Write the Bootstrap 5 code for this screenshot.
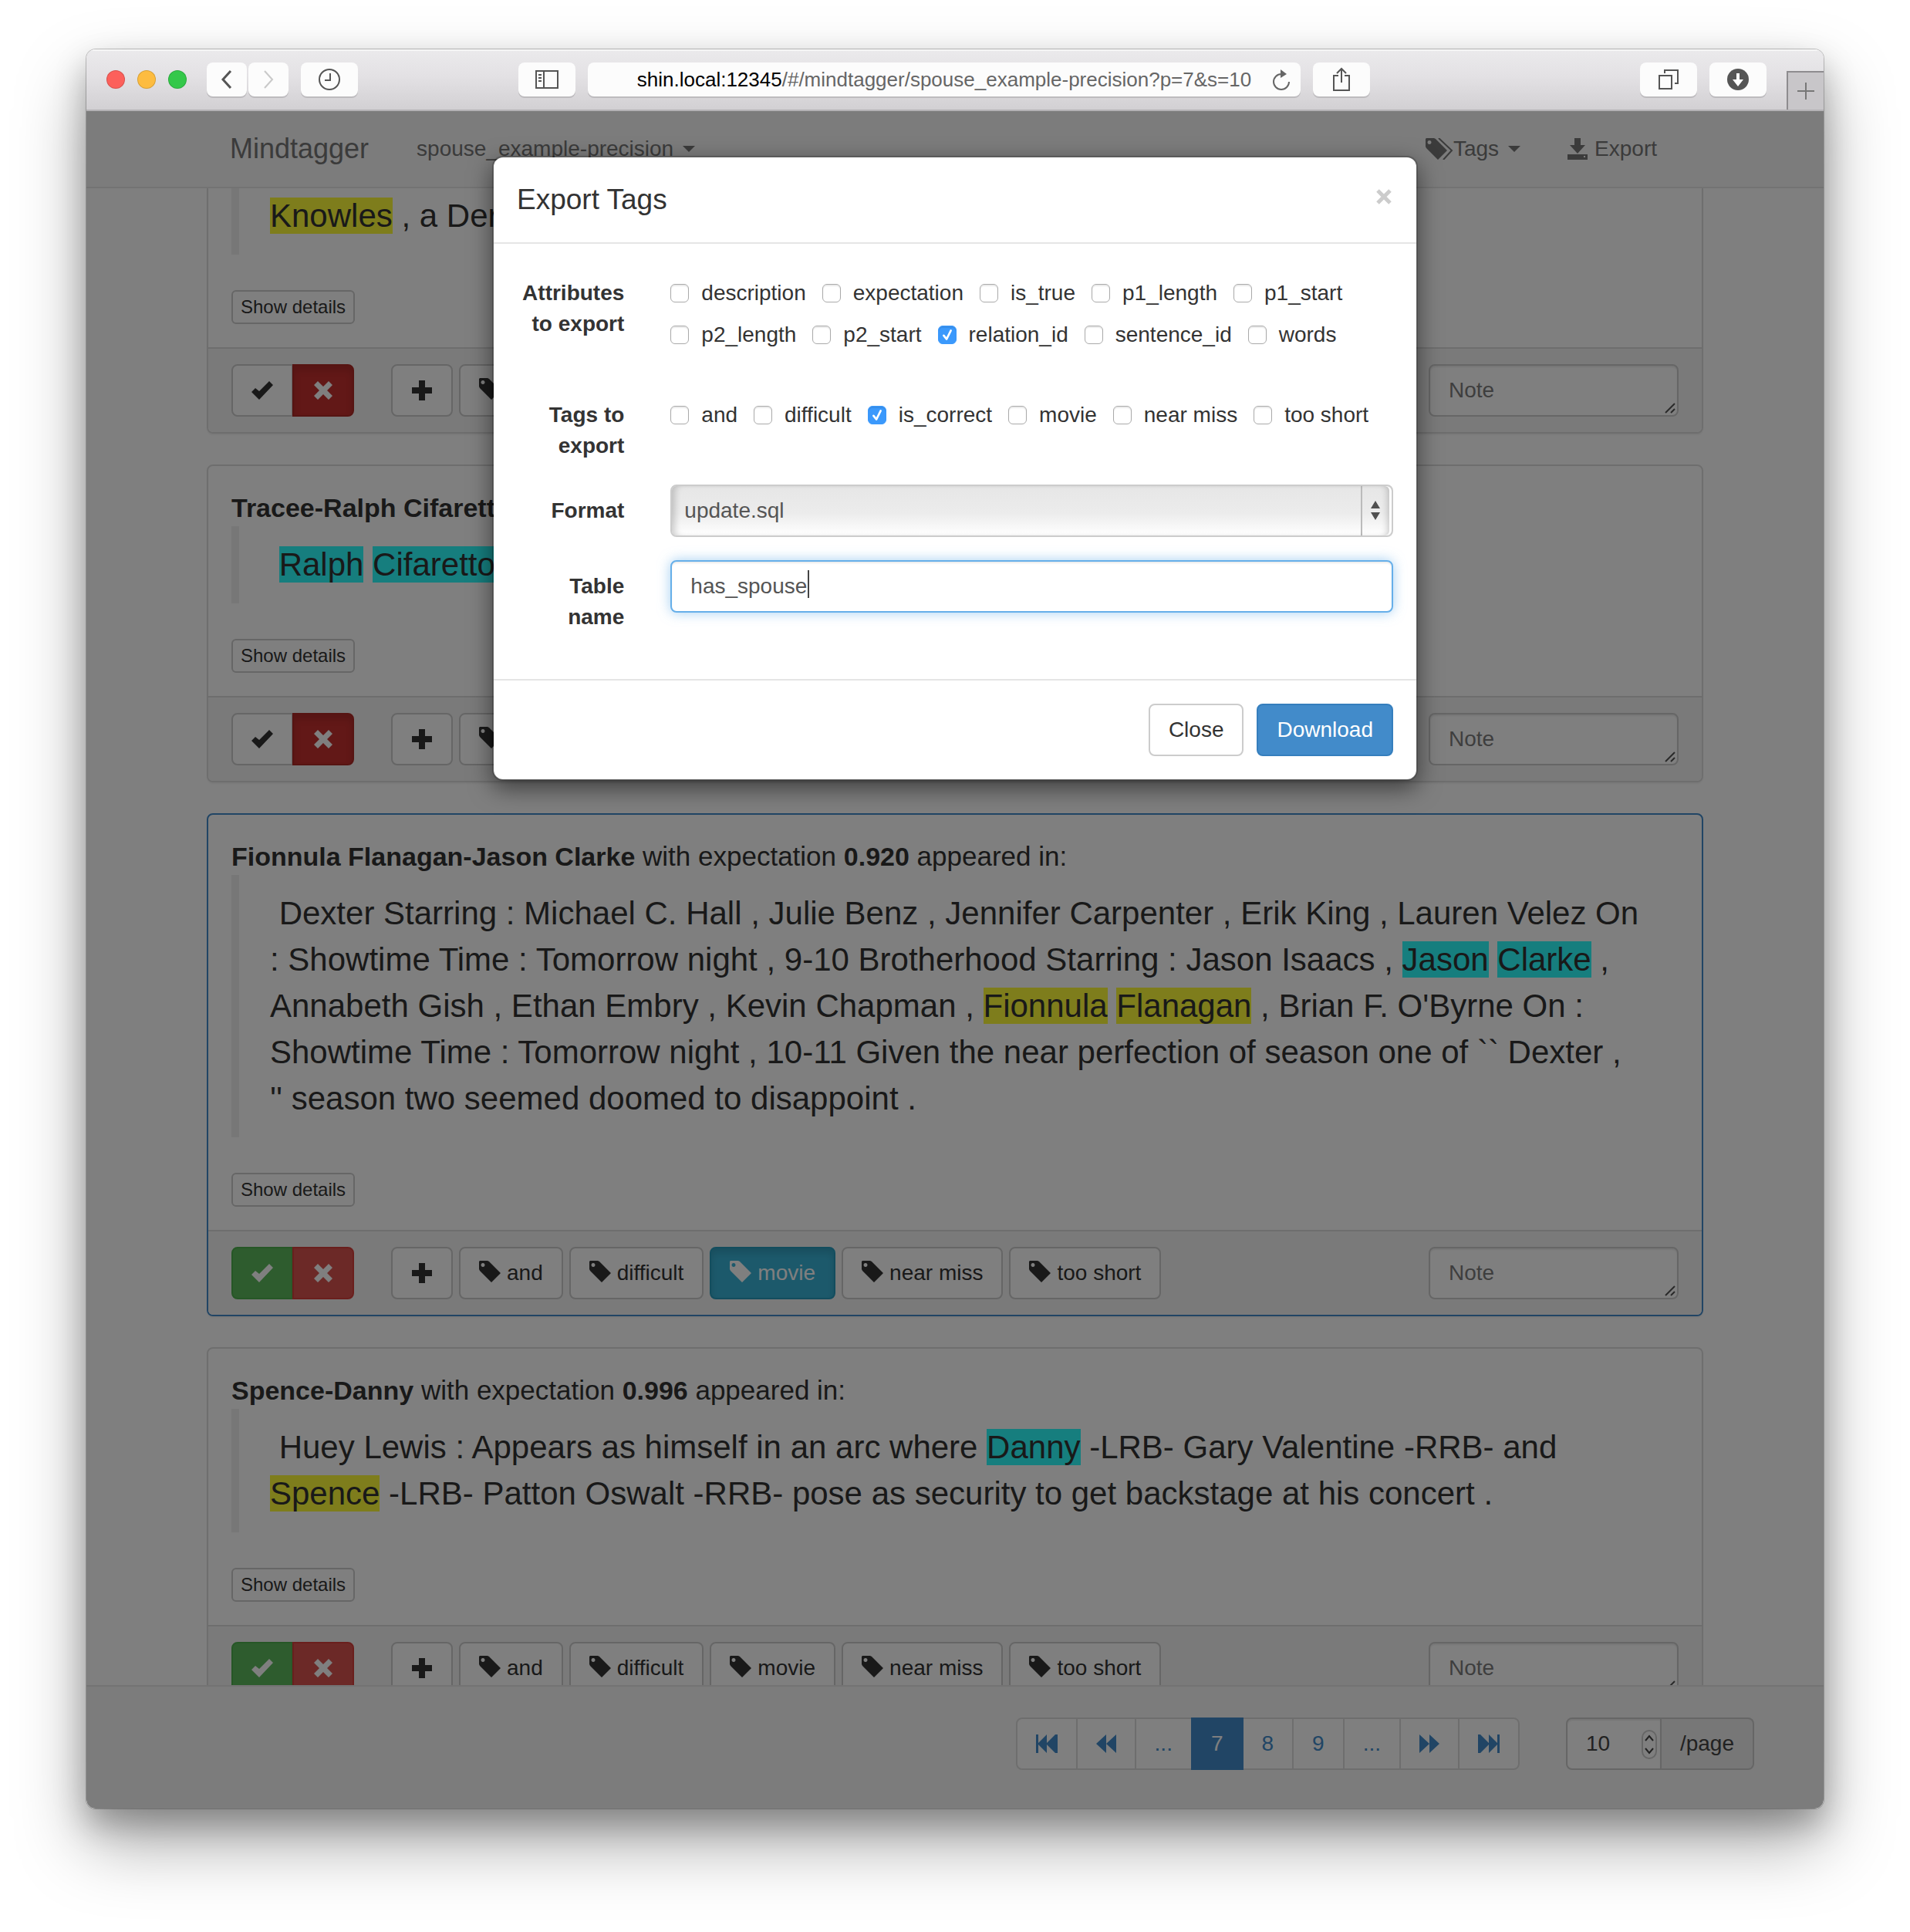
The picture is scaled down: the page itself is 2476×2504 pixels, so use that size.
<!DOCTYPE html>
<html lang="en">
<head>
<meta charset="utf-8">
<meta name="viewport" content="width=device-width, initial-scale=1">
<title>Mindtagger</title>
<link rel="stylesheet" href="https://cdn.jsdelivr.net/npm/bootstrap@5.3.0/dist/css/bootstrap.min.css">
<script src="https://cdn.jsdelivr.net/npm/bootstrap@5.3.0/dist/js/bootstrap.bundle.min.js"></script>
<style>
  body { font: 28px/40px "Liberation Sans", Arial, sans-serif; color: #333; background: #fff; padding: 64px 112px 160px; overflow: hidden; }
  svg { display: block; flex: none; fill: currentColor; }

  /* browser window */
  .win { height: calc(100vh - 224px); border-radius: 12px; overflow: hidden; box-shadow: 0 0 0 1px rgba(0,0,0,.22), 0 44px 90px rgba(0,0,0,.35), 0 20px 40px rgba(0,0,0,.25); }
  .toolbar { height: 80px; padding-left: 26px; background: linear-gradient(#ebeaec, #e3e1e4 45%, #d2d0d3); border-bottom: 2px solid #b4b2b5; box-shadow: inset 0 2px 0 #f6f6f6; }
  .light { width: 24px; height: 24px; border-radius: 50%; border: 1px solid rgba(0,0,0,.15); padding: 0; }
  .l-red { background: #fc605b; } .l-amber { background: #fdbc40; } .l-green { background: #34c84a; }
  .tool { width: 74px; height: 44px; padding: 0; border: 0; border-radius: 8px; background: #fcfcfc; box-shadow: 0 2px 0 #bdbbbe; color: #555; display: flex; align-items: center; justify-content: center; }
  .tool-sm { width: 52px; }
  .tools-nav { margin-left: 26px; gap: 2px; }
  .tool svg, .address svg { fill: none; stroke: currentColor; stroke-width: 2; }
  .address { height: 44px; padding: 0 14px 0 36px; border-radius: 8px; background: #fcfcfc; box-shadow: 0 2px 0 #bdbbbe; font-size: 26px; color: #666; }
  .tools-mid { margin: 0 350px 0 208px; gap: 16px; }
  .newtab { width: 48px; height: 50px; padding: 0; border: solid #8e8c8f; border-width: 2px 0 0 2px; background: #c8c6c9; color: #777; margin-left: 26px; }

  /* application */
  .bar { background: #f8f8f8; border: 0 solid #e7e7e7; }
  .topbar { height: 100px; border-bottom-width: 2px; }
  .botbar { height: 160px; border-top-width: 2px; padding: 40px 90px 0; }
  .wrap { width: 100%; max-width: 1940px; margin: 0 auto; }
  .topbar .wrap { padding: 0 60px 0 30px; }
  .topbar a { color: #777; text-decoration: none; }
  .brand { font-size: 36px; margin-right: 62px; }
  .tagmenu { margin-right: 60px; }
  .caret { width: 0; height: 0; border: 8px solid transparent; border-top-color: currentColor; border-bottom: 0; margin-left: 12px; }
  .task { border: 2px solid #ddd; border-radius: 8px; margin-bottom: 40px; box-shadow: 0 2px 2px rgba(0,0,0,.05); }
  .task.current { border-color: #428bca; }
  .task .card-body { padding: 30px; }
  .task.cut { border-top: 0; border-radius: 0 0 8px 8px; }
  .task.cut .card-body { padding-top: 0; }
  .task.cut .sentence { padding-top: 6px; }
  .headline { font-size: 35px; line-height: 48px; margin: 0; }
  .headline strong { font-size: 34px; }
  .sentence { font-size: 42px; line-height: 60px; margin: 0 0 46px; padding: 20px 40px; border-left: 10px solid #eee; }
  .p1, .p2 { color: inherit; padding: 0; }
  .p1 { background: #fcfa38; } .p2 { background: #2cfcfc; }
  .task .card-footer { padding: 20px 30px; background: #f5f5f5; border-top: 2px solid #ddd; border-radius: 0 0 6px 6px; }
  .btn { --bs-btn-font-size: 28px; --bs-btn-line-height: 40px; --bs-btn-padding-x: 24px; --bs-btn-padding-y: 12px; --bs-btn-border-width: 2px; --bs-btn-border-radius: 8px; }
  .ui { height: 68px; display: inline-flex; align-items: center; gap: 8px; white-space: nowrap; background: #fff; color: #333; border-color: #ccc; }
  .ui.mini { height: 44px; padding: 0 10px; font-size: 24px; border-radius: 6px; }
  .ui.good { background: #5cb85c; border-color: #4cae4c; color: #fff; }
  .ui.bad { background: #d9534f; border-color: #d43f3a; color: #fff; }
  .ui.bad.on { background: #c4302e; border-color: #ac2925; box-shadow: inset 0 6px 10px rgba(0,0,0,.125); }
  .ui.tagged { background: #39b3d7; border-color: #269abc; color: #fff; box-shadow: inset 0 6px 10px rgba(0,0,0,.125); }
  .ui.primary { background: #428bca; border-color: #357ebd; color: #fff; }
  .verdict { margin-right: 48px; }
  .verdict .ui { width: 80px; justify-content: center; }
  .verdict .ui.bad { margin-left: -2px; }
  .ui.add { width: 80px; justify-content: center; }
  .field { height: 68px; border: 2px solid #ccc; border-radius: 8px; padding: 12px 24px; font-size: 28px; line-height: 40px; color: #555; background: #fff; box-shadow: inset 0 2px 2px rgba(0,0,0,.075); }
  .field::placeholder { color: #7c7c7c; }
  .note { width: 324px; }
  .note .field { resize: none; overflow: hidden; }
  .grip { position: absolute; right: 4px; bottom: 4px; color: #555; }

  .pagination { --bs-pagination-font-size: 28px; --bs-pagination-padding-x: 24px; --bs-pagination-padding-y: 12px; --bs-pagination-color: #428bca; --bs-pagination-border-color: #ddd; --bs-pagination-border-width: 2px; --bs-pagination-border-radius: 8px; --bs-pagination-active-bg: #428bca; --bs-pagination-active-border-color: #428bca; isolation: isolate; }
  .pagination .page-link { height: 68px; display: flex; align-items: center; }
  .pagination .page-item:not(:first-child) .page-link { margin-left: -2px; }
  .persize { width: 244px; margin-left: 60px; }
  .persize .field { border-radius: 8px 0 0 8px; appearance: textfield; }
  .persize .field::-webkit-inner-spin-button { display: none; }
  .persize .input-group-text { font-size: 28px; line-height: 40px; padding: 0 24px; border: 2px solid #ccc; border-left: 0; border-radius: 0 8px 8px 0; background: #eee; }
  .persize .input-group-text, .persize .field { color: #444; }
  .spin { position: absolute; right: 6px; top: 16px; color: #444; }

  /* dialog */
  .shade { position: absolute; inset: 0; z-index: 10; background: rgba(0,0,0,.5); padding-top: 58px; }
  .shade .modal-content { width: 1200px; max-width: 100%; color: #333; background: #fff; border: 2px solid rgba(0,0,0,.2); border-radius: 14px; background-clip: padding-box; box-shadow: 0 10px 30px rgba(0,0,0,.5); }
  .shade .modal-header { padding: 30px; height: 112px; border-bottom: 2px solid #e5e5e5; }
  .shade .modal-title { font-size: 37px; line-height: 50px; font-weight: 400; }
  .dismiss { border: 0; background: none; padding: 0 2px 8px; color: #ccc; }
  .shade .modal-body { padding: 30px; }
  .shade .row { --bs-gutter-x: 60px; margin-bottom: 30px; }
  .rowlabel { padding-top: 14px; text-align: right; font-weight: 700; font-size: 28px; line-height: 40px; }
  .checks { column-gap: 21px; }
  .checks.two { padding-bottom: 20px; }
  .checks label { padding-top: 14px; gap: 16px; }
  .checks .form-check-input { width: 24px; height: 24px; margin: 0; border: 1px solid #aaa; border-radius: 6px; box-shadow: inset 0 2px 1px rgba(0,0,0,.08); }
  .checks .form-check-input:checked { border-color: #3b99fc; background: #3b99fc url("data:image/svg+xml,%3Csvg xmlns='http://www.w3.org/2000/svg' viewBox='0 0 24 24'%3E%3Cpath d='M7 13l4 5L17 6' fill='none' stroke='white' stroke-width='3' stroke-linecap='round' stroke-linejoin='round'/%3E%3C/svg%3E") center/contain no-repeat; }
  .format { appearance: none; width: 100%; padding: 12px 16px; background: url("data:image/svg+xml,%3Csvg xmlns='http://www.w3.org/2000/svg' width='40' height='64'%3E%3Cpath d='M1 0V64' stroke='%23bbb' stroke-width='2'/%3E%3Cpath d='M13 29L19 19L25 29zM13 34L19 44L25 34z' fill='%23505050'/%3E%3C/svg%3E") right center no-repeat, linear-gradient(#e6e6e6, #ececec 55%, #fff); box-shadow: inset 8px 0 8px -4px rgba(0,0,0,.18), inset -3px 0 0 #fff, inset -10px 0 8px -5px rgba(0,0,0,.2); }
  .tname { border-color: #66afe9; box-shadow: inset 0 2px 2px rgba(0,0,0,.075), 0 0 16px rgba(102,175,233,.6); }
  .cursor { position: absolute; left: 208px; top: 13px; width: 2px; height: 36px; background: #444; }
  .shade .modal-footer { padding: 30px; gap: 17px; border-top: 2px solid #e5e5e5; }
  .shade .modal-footer > * { margin: 0; }
</style>
</head>
<body>
<svg width="0" height="0" class="position-absolute" aria-hidden="true">
  <symbol id="ok" viewBox="0 0 28 24"><path d="M0 14l5-5 5 4L23 0l5 5L10 24z"/></symbol>
  <symbol id="no" viewBox="0 0 24 24"><path d="M5 0l7 7 7-7 5 5-7 7 7 7-5 5-7-7-7 7-5-5 7-7-7-7z"/></symbol>
  <symbol id="plus" viewBox="0 0 26 26"><path d="M9 0h8v9h9v8h-9v9H9v-9H0V9h9z"/></symbol>
  <symbol id="tag" viewBox="0 0 28 32"><path fill-rule="evenodd" d="M1 0H11L13 1L28 16L16 28L1 13L0 11V1zM5 3a2.500 2.500 0 1 0 .01 0z"/></symbol>
  <symbol id="grip" viewBox="0 0 14 14"><path d="M1 13L13 1M8 13l5-5" fill="none" stroke="currentColor" stroke-width="2"/></symbol>
  <symbol id="rew" viewBox="0 0 26 24"><path d="M13 0v24L0 12zM26 0v24L13 12z"/></symbol>
  <symbol id="first" viewBox="0 0 28 24"><path d="M0 0h3v11L14 0v11L25 0h3v24h-3L14 13v11L3 13v11H0z"/></symbol>
</svg>

<div class="win d-flex flex-column">
  <header class="toolbar d-flex align-items-center flex-shrink-0">
    <div class="d-flex gap-3">
      <button class="light l-red" aria-label="Close window"></button>
      <button class="light l-amber" aria-label="Minimize"></button>
      <button class="light l-green" aria-label="Zoom"></button>
    </div>
    <div class="tools-nav d-flex">
      <button class="tool tool-sm" aria-label="Back"><svg width="16" height="26"><path d="M13 2L3 13l10 11" stroke-width="3"/></svg></button>
      <button class="tool tool-sm" aria-label="Forward"><svg width="16" height="26" opacity=".3"><path d="M3 2l10 11L3 24"/></svg></button>
    </div>
    <button class="tool ms-3" aria-label="History"><svg width="28" height="28"><circle cx="14" cy="14" r="13"/><path d="M15 6v9H8"/></svg></button>
    <div class="tools-mid d-flex flex-fill">
      <button class="tool flex-shrink-0" aria-label="Sidebar"><svg width="30" height="24"><path d="M1 1h28v22H1zM11 1v22M4 6h4M4 10h4M4 14h4"/></svg></button>
      <div class="address d-flex align-items-center flex-fill">
        <span class="flex-fill text-center text-nowrap"><span class="text-black">shin.local:12345</span>/#/mindtagger/spouse_example-precision?p=7&amp;s=10</span>
        <svg width="22" height="28"><path d="M11 7A10 10 0 1 0 21 17"/><path d="M10 1v11l8-5z" fill="currentColor" stroke="none"/></svg>
      </div>
      <button class="tool flex-shrink-0" aria-label="Share"><svg width="24" height="32"><path d="M8 11H2v19h20V11h-6M12 20V2M6 8l6-6 6 6"/></svg></button>
    </div>
    <button class="tool" aria-label="Tabs"><svg width="26" height="26"><path d="M1 8h16v17H1zM8 5V1h17v17h-4"/></svg></button>
    <button class="tool ms-3" aria-label="Downloads"><svg width="28" height="28"><circle cx="14" cy="14" r="14" fill="currentColor" stroke="none"/><path d="M12 6h4v8h5l-7 9-7-9h5z" fill="#fff" stroke="none"/></svg></button>
    <button class="newtab align-self-end d-flex align-items-center justify-content-center" aria-label="New tab"><svg width="22" height="22"><path d="M10 0h2v10h10v2H12v10h-2V12H0v-2h10z"/></svg></button>
  </header>

  <div class="position-relative flex-fill d-flex flex-column overflow-hidden bg-white">
    <nav class="bar topbar d-flex flex-shrink-0">
      <div class="wrap d-flex align-items-center">
        <a href="#" class="brand">Mindtagger</a>
        <a href="#" class="d-flex align-items-center me-auto">spouse_example-precision<span class="caret"></span></a>
        <a href="#" class="tagmenu d-flex align-items-center"><svg width="36" height="28"><path fill-rule="evenodd" d="M1 0H11L13 1L28 16L16 28L1 13L0 11V1zM5 3a2.500 2.500 0 1 0 .01 0z"/><path d="M17 0l17 16-11 12" fill="none" stroke="currentColor" stroke-width="2"/></svg>Tags<span class="caret"></span></a>
        <a href="#" class="d-flex align-items-center gap-2"><svg width="28" height="28"><path fill-rule="evenodd" d="M10 0h8v9h6L14 20 4 9h6zM1 21h26v7H1zM22 23v2h2v-2z"/></svg>Export</a>
      </div>
    </nav>

    <main class="flex-fill overflow-hidden" style="min-height:0">
      <div class="wrap">

        <article class="card task cut">
          <div class="card-body">
            <blockquote class="sentence"><mark class="p1">Knowles</mark> , a Der</blockquote>
            <button class="btn ui mini">Show details</button>
          </div>
          <div class="card-footer d-flex">
            <div class="btn-group verdict">
              <button class="btn ui" aria-label="Correct"><svg width="28" height="24"><use href="#ok"/></svg></button>
              <button class="btn ui bad on" aria-label="Wrong"><svg width="24" height="24"><use href="#no"/></svg></button>
            </div>
            <div class="d-flex gap-2">
              <button class="btn ui add" aria-label="Add tag"><svg width="26" height="26"><use href="#plus"/></svg></button>
              <button class="btn ui" aria-label="Tag"><svg width="28" height="32"><use href="#tag"/></svg></button>
            </div>
            <div class="note position-relative ms-auto"><textarea class="field w-100 d-block" placeholder="Note" aria-label="Note"></textarea><svg class="grip" width="14" height="14"><use href="#grip"/></svg></div>
          </div>
        </article>

        <article class="card task">
          <div class="card-body">
            <p class="headline"><strong>Tracee-Ralph Cifarett</strong></p>
            <blockquote class="sentence">&nbsp;<mark class="p2">Ralph</mark> <mark class="p2">Cifaretto</mark></blockquote>
            <button class="btn ui mini">Show details</button>
          </div>
          <div class="card-footer d-flex">
            <div class="btn-group verdict">
              <button class="btn ui" aria-label="Correct"><svg width="28" height="24"><use href="#ok"/></svg></button>
              <button class="btn ui bad on" aria-label="Wrong"><svg width="24" height="24"><use href="#no"/></svg></button>
            </div>
            <div class="d-flex gap-2">
              <button class="btn ui add" aria-label="Add tag"><svg width="26" height="26"><use href="#plus"/></svg></button>
              <button class="btn ui" aria-label="Tag"><svg width="28" height="32"><use href="#tag"/></svg></button>
            </div>
            <div class="note position-relative ms-auto"><textarea class="field w-100 d-block" placeholder="Note" aria-label="Note"></textarea><svg class="grip" width="14" height="14"><use href="#grip"/></svg></div>
          </div>
        </article>

        <article class="card task current">
          <div class="card-body">
            <p class="headline"><strong>Fionnula Flanagan-Jason Clarke</strong> with expectation <strong>0.920</strong> appeared in:</p>
            <blockquote class="sentence">&nbsp;Dexter Starring : Michael C. Hall , Julie Benz , Jennifer Carpenter , Erik King , Lauren Velez On : Showtime Time : Tomorrow night , 9-10 Brotherhood Starring : Jason Isaacs , <mark class="p2">Jason</mark> <mark class="p2">Clarke</mark> , Annabeth Gish , Ethan Embry , Kevin Chapman , <mark class="p1">Fionnula</mark> <mark class="p1">Flanagan</mark> , Brian F. O'Byrne On : Showtime Time : Tomorrow night , 10-11 Given the near perfection of season one of `` Dexter , ''&nbsp;season two seemed doomed to disappoint .</blockquote>
            <button class="btn ui mini">Show details</button>
          </div>
          <div class="card-footer d-flex">
            <div class="btn-group verdict">
              <button class="btn ui good" aria-label="Correct"><svg width="28" height="24"><use href="#ok"/></svg></button>
              <button class="btn ui bad" aria-label="Wrong"><svg width="24" height="24"><use href="#no"/></svg></button>
            </div>
            <div class="d-flex gap-2">
              <button class="btn ui add" aria-label="Add tag"><svg width="26" height="26"><use href="#plus"/></svg></button>
              <button class="btn ui"><svg width="28" height="32"><use href="#tag"/></svg>and</button>
              <button class="btn ui"><svg width="28" height="32"><use href="#tag"/></svg>difficult</button>
              <button class="btn ui tagged"><svg width="28" height="32"><use href="#tag"/></svg>movie</button>
              <button class="btn ui"><svg width="28" height="32"><use href="#tag"/></svg>near miss</button>
              <button class="btn ui"><svg width="28" height="32"><use href="#tag"/></svg>too short</button>
            </div>
            <div class="note position-relative ms-auto"><textarea class="field w-100 d-block" placeholder="Note" aria-label="Note"></textarea><svg class="grip" width="14" height="14"><use href="#grip"/></svg></div>
          </div>
        </article>

        <article class="card task">
          <div class="card-body">
            <p class="headline"><strong>Spence-Danny</strong> with expectation <strong>0.996</strong> appeared in:</p>
            <blockquote class="sentence">&nbsp;Huey Lewis : Appears as himself in an arc where <mark class="p2">Danny</mark> -LRB- Gary Valentine -RRB- and <mark class="p1">Spence</mark> -LRB- Patton Oswalt -RRB- pose as security to get backstage at his concert .</blockquote>
            <button class="btn ui mini">Show details</button>
          </div>
          <div class="card-footer d-flex">
            <div class="btn-group verdict">
              <button class="btn ui good" aria-label="Correct"><svg width="28" height="24"><use href="#ok"/></svg></button>
              <button class="btn ui bad" aria-label="Wrong"><svg width="24" height="24"><use href="#no"/></svg></button>
            </div>
            <div class="d-flex gap-2">
              <button class="btn ui add" aria-label="Add tag"><svg width="26" height="26"><use href="#plus"/></svg></button>
              <button class="btn ui"><svg width="28" height="32"><use href="#tag"/></svg>and</button>
              <button class="btn ui"><svg width="28" height="32"><use href="#tag"/></svg>difficult</button>
              <button class="btn ui"><svg width="28" height="32"><use href="#tag"/></svg>movie</button>
              <button class="btn ui"><svg width="28" height="32"><use href="#tag"/></svg>near miss</button>
              <button class="btn ui"><svg width="28" height="32"><use href="#tag"/></svg>too short</button>
            </div>
            <div class="note position-relative ms-auto"><textarea class="field w-100 d-block" placeholder="Note" aria-label="Note"></textarea><svg class="grip" width="14" height="14"><use href="#grip"/></svg></div>
          </div>
        </article>
      </div>
    </main>

    <footer class="bar botbar d-flex justify-content-end align-items-start flex-shrink-0">
      <ul class="pagination m-0">
        <li class="page-item"><a class="page-link" href="#" aria-label="First"><svg width="28" height="24"><use href="#first"/></svg></a></li>
        <li class="page-item"><a class="page-link" href="#" aria-label="Back"><svg width="26" height="24"><use href="#rew"/></svg></a></li>
        <li class="page-item"><a class="page-link" href="#">...</a></li>
        <li class="page-item active"><a class="page-link" href="#">7</a></li>
        <li class="page-item"><a class="page-link" href="#">8</a></li>
        <li class="page-item"><a class="page-link" href="#">9</a></li>
        <li class="page-item"><a class="page-link" href="#">...</a></li>
        <li class="page-item"><a class="page-link" href="#" aria-label="Forward"><svg width="26" height="24"><use href="#rew" transform="matrix(-1 0 0 1 26 0)"/></svg></a></li>
        <li class="page-item"><a class="page-link" href="#" aria-label="Last"><svg width="28" height="24"><use href="#first" transform="matrix(-1 0 0 1 28 0)"/></svg></a></li>
      </ul>
      <div class="persize d-flex">
        <div class="position-relative flex-fill">
          <input class="field w-100" type="number" value="10" aria-label="Items per page">
          <svg class="spin" width="20" height="38"><rect x="1" y="1" width="18" height="36" rx="9" fill="#fff" stroke="#ccc" stroke-width="2"/><path d="M5 14l5-6 5 6M5 24l5 6 5-6" fill="none" stroke="currentColor" stroke-width="2"/></svg>
        </div>
        <span class="input-group-text">/page</span>
      </div>
    </footer>

    <div class="shade d-flex justify-content-center align-items-start">
      <form class="modal-content" role="dialog" aria-labelledby="dlg">
        <div class="modal-header d-flex justify-content-between">
          <h4 class="modal-title" id="dlg">Export Tags</h4>
          <button type="button" class="dismiss" aria-label="Dismiss"><svg width="20" height="20"><path d="M2 2l16 16M18 2L2 18" stroke="currentColor" stroke-width="5"/></svg></button>
        </div>
        <div class="modal-body">
          <div class="row">
            <div class="col-2 rowlabel">Attributes to export</div>
            <div class="col-10 checks two d-flex flex-wrap">
              <label class="d-flex align-items-center"><input class="form-check-input" type="checkbox">description</label>
              <label class="d-flex align-items-center"><input class="form-check-input" type="checkbox">expectation</label>
              <label class="d-flex align-items-center"><input class="form-check-input" type="checkbox">is_true</label>
              <label class="d-flex align-items-center"><input class="form-check-input" type="checkbox">p1_length</label>
              <label class="d-flex align-items-center"><input class="form-check-input" type="checkbox">p1_start</label>
              <label class="d-flex align-items-center"><input class="form-check-input" type="checkbox">p2_length</label>
              <label class="d-flex align-items-center"><input class="form-check-input" type="checkbox">p2_start</label>
              <label class="d-flex align-items-center"><input class="form-check-input" type="checkbox" checked>relation_id</label>
              <label class="d-flex align-items-center"><input class="form-check-input" type="checkbox">sentence_id</label>
              <label class="d-flex align-items-center"><input class="form-check-input" type="checkbox">words</label>
            </div>
          </div>
          <div class="row">
            <div class="col-2 rowlabel">Tags to export</div>
            <div class="col-10 checks d-flex flex-wrap align-content-start">
              <label class="d-flex align-items-center"><input class="form-check-input" type="checkbox">and</label>
              <label class="d-flex align-items-center"><input class="form-check-input" type="checkbox">difficult</label>
              <label class="d-flex align-items-center"><input class="form-check-input" type="checkbox" checked>is_correct</label>
              <label class="d-flex align-items-center"><input class="form-check-input" type="checkbox">movie</label>
              <label class="d-flex align-items-center"><input class="form-check-input" type="checkbox">near miss</label>
              <label class="d-flex align-items-center"><input class="form-check-input" type="checkbox">too short</label>
            </div>
          </div>
          <div class="row">
            <label class="col-2 rowlabel" for="format">Format</label>
            <div class="col-10"><select class="field format d-block" id="format"><option>update.sql</option></select></div>
          </div>
          <div class="row">
            <label class="col-2 rowlabel" for="tname">Table name</label>
            <div class="col-10 position-relative"><input class="field tname w-100 d-block" id="tname" type="text" value="has_spouse"><span class="cursor"></span></div>
          </div>
        </div>
        <div class="modal-footer">
          <button type="button" class="btn ui">Close</button>
          <button type="button" class="btn ui primary">Download</button>
        </div>
      </form>
    </div>
  </div>
</div>
</body>
</html>
